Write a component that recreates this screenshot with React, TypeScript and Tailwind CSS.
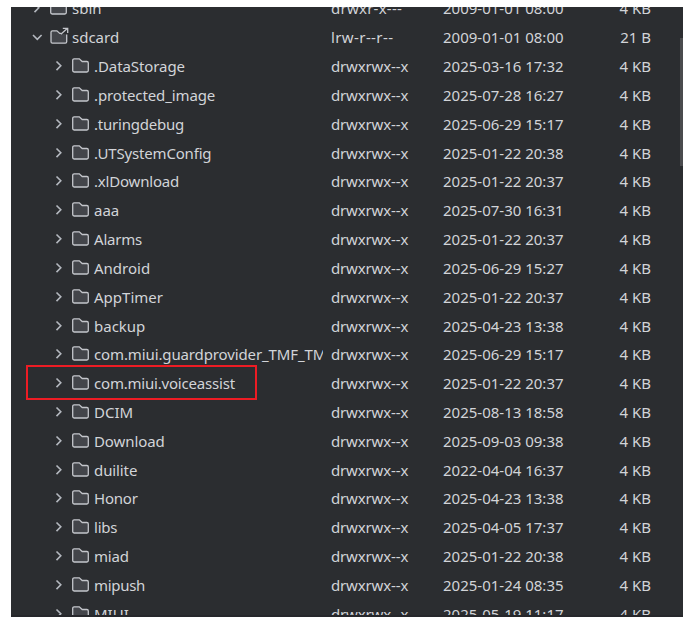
import React from "react";
import clsx from "clsx";

type Entry = {
  name: string;
  perms: string;
  date: string;
  size: string;
  depth: number;
  link?: boolean;
  tracking?: string;
  permsTracking?: string;
};

const entries: Entry[] = [
  { name: "sbin", perms: "drwxr-x---", date: "2009-01-01 08:00", size: "4 KB", depth: 0, permsTracking: "tracking-[0.25px]" },
  { name: "sdcard", perms: "lrw-r--r--", date: "2009-01-01 08:00", size: "21 B", depth: 0, link: true, permsTracking: "tracking-[0.4px]" },
  { name: ".DataStorage", perms: "drwxrwx--x", date: "2025-03-16 17:32", size: "4 KB", depth: 1, tracking: "tracking-[-0.08px]" },
  { name: ".protected_image", perms: "drwxrwx--x", date: "2025-07-28 16:27", size: "4 KB", depth: 1, tracking: "tracking-[-0.12px]" },
  { name: ".turingdebug", perms: "drwxrwx--x", date: "2025-06-29 15:17", size: "4 KB", depth: 1, tracking: "tracking-[-0.22px]" },
  { name: ".UTSystemConfig", perms: "drwxrwx--x", date: "2025-01-22 20:38", size: "4 KB", depth: 1, tracking: "tracking-[-0.18px]" },
  { name: ".xlDownload", perms: "drwxrwx--x", date: "2025-01-22 20:37", size: "4 KB", depth: 1, tracking: "tracking-[-0.2px]" },
  { name: "aaa", perms: "drwxrwx--x", date: "2025-07-30 16:31", size: "4 KB", depth: 1 },
  { name: "Alarms", perms: "drwxrwx--x", date: "2025-01-22 20:37", size: "4 KB", depth: 1, tracking: "tracking-[-0.2px]" },
  { name: "Android", perms: "drwxrwx--x", date: "2025-06-29 15:27", size: "4 KB", depth: 1 },
  { name: "AppTimer", perms: "drwxrwx--x", date: "2025-01-22 20:37", size: "4 KB", depth: 1 },
  { name: "backup", perms: "drwxrwx--x", date: "2025-04-23 13:38", size: "4 KB", depth: 1 },
  { name: "com.miui.guardprovider_TMF_TMS", perms: "drwxrwx--x", date: "2025-06-29 15:17", size: "4 KB", depth: 1, tracking: "tracking-[-0.12px]" },
  { name: "com.miui.voiceassist", perms: "drwxrwx--x", date: "2025-01-22 20:37", size: "4 KB", depth: 1, tracking: "tracking-[-0.2px]" },
  { name: "DCIM", perms: "drwxrwx--x", date: "2025-08-13 18:58", size: "4 KB", depth: 1 },
  { name: "Download", perms: "drwxrwx--x", date: "2025-09-03 09:38", size: "4 KB", depth: 1, tracking: "tracking-[-0.1px]" },
  { name: "duilite", perms: "drwxrwx--x", date: "2022-04-04 16:37", size: "4 KB", depth: 1, tracking: "tracking-[-0.1px]" },
  { name: "Honor", perms: "drwxrwx--x", date: "2025-04-23 13:38", size: "4 KB", depth: 1, tracking: "tracking-[-0.2px]" },
  { name: "libs", perms: "drwxrwx--x", date: "2025-04-05 17:37", size: "4 KB", depth: 1, tracking: "tracking-[-0.2px]" },
  { name: "miad", perms: "drwxrwx--x", date: "2025-01-22 20:38", size: "4 KB", depth: 1, tracking: "tracking-[-0.2px]" },
  { name: "mipush", perms: "drwxrwx--x", date: "2025-01-24 08:35", size: "4 KB", depth: 1, tracking: "tracking-[-0.3px]" },
  { name: "MIUI", perms: "drwxrwx--x", date: "2025-05-19 11:17", size: "4 KB", depth: 1 },
];

function Chevron({ open }: { open?: boolean }) {
  return (
    <svg width="16" height="20" viewBox="0 0 16 20" fill="none" stroke="#b4b8bf" strokeWidth="1.6" className="shrink-0">
      <path d={open ? "M4 8l4.300 4.300L12.600 8" : "M5.500 5.500 9.800 9.800 5.500 14.100"} />
    </svg>
  );
}

function Folder({ link }: { link?: boolean }) {
  return (
    <svg width="20" height="20" viewBox="0 0 20 20" fill="#43454a" stroke="#c4c6cb" strokeWidth="1.3" className="shrink-0 overflow-visible">
      {link ? (
        <>
          <path d="M11.200 6.400H9.800L6.900 3.800H2.400A1.400 1.400 0 0 0 1 5.200v9.600a1.400 1.400 0 0 0 1.400 1.400h12.900a1.400 1.400 0 0 0 1.400-1.400V7.500" />
          <path d="M10.800 7.300 17.300 1.600M12.800 1.300h4.900v4.700" fill="none" />
        </>
      ) : (
        <path d="M.7 4.200A1.400 1.400 0 0 1 2.100 2.800h5.200l2.900 2.700h4.700a1.400 1.400 0 0 1 1.400 1.400v7.700a1.400 1.400 0 0 1-1.400 1.400H2.100A1.400 1.400 0 0 1 .7 14.600z" />
      )}
    </svg>
  );
}

function Row({ entry }: { entry: Entry }) {
  return (
    <div className="flex h-[28.83px] items-center">
      <div className={clsx("flex w-[312px] shrink-0 items-center overflow-hidden", entry.depth ? "pl-10" : "pl-[18px]")}>
        <Chevron open={entry.link} />
        <span className="w-[5px] shrink-0" />
        <Folder link={entry.link} />
        <span className={clsx("ml-[2px] whitespace-pre", entry.tracking)}>{entry.name}</span>
      </div>
      <span className={clsx("ml-[8px] w-[112px] whitespace-pre", entry.permsTracking ?? "tracking-[-0.15px]")}>{entry.perms}</span>
      <span className="w-[136px] whitespace-pre">{entry.date}</span>
      <span className="w-[72px] whitespace-pre text-right">{entry.size}</span>
    </div>
  );
}

export default function App() {
  return (
    <div className="h-[629px] w-[700px] bg-white pl-[11px] pt-[7px]">
      <div className="relative h-[610px] w-[672px] overflow-hidden border-b-2 border-[#26272b] bg-[#2b2d30] font-['Noto_Sans',sans-serif] text-[15px] leading-5 text-[#d2d4d8]">
        <div className="-mt-[13px]">
          {entries.map((entry) => (
            <Row key={entry.name} entry={entry} />
          ))}
        </div>
        {/* Scrollbar thumb */}
        <div className="absolute right-0 top-[31px] h-[128px] w-[3px] bg-[#4a4b4e]" />
        {/* Highlighted folder */}
        <div className="absolute left-[15px] top-[358px] h-[35px] w-[231px] border-2 border-[#ed1c24]" />
      </div>
    </div>
  );
}
